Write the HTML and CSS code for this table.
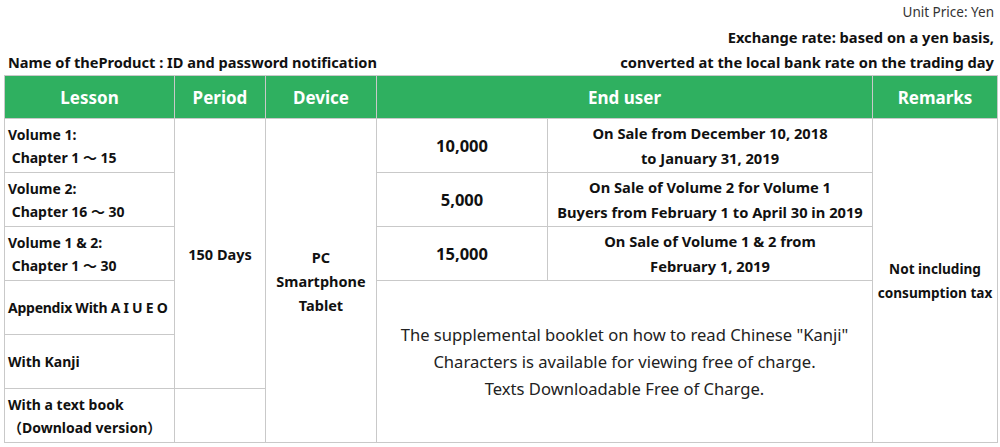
FILE: index.html
```html
<!DOCTYPE html>
<html>
<head>
<meta charset="utf-8">
<link rel="stylesheet" href="styles.css">
</head>
<body>
<div class="page">
  <div class="unit">Unit Price: Yen</div>
  <div class="rate first">Exchange rate: based on a yen basis,</div>
  <div class="titlebar">
    <div class="product">Name of theProduct : ID and password notification</div>
    <div class="rate">converted at the local bank rate on the trading day</div>
  </div>
  <table class="price">
    <colgroup>
      <col class="c-lesson"><col class="c-period"><col class="c-device"><col class="c-price"><col class="c-desc"><col class="c-rem">
    </colgroup>
    <thead>
      <tr>
        <th>Lesson</th><th>Period</th><th>Device</th><th colspan="2">End user</th><th>Remarks</th>
      </tr>
    </thead>
    <tbody>
      <tr>
        <td class="lesson">Volume 1:<br>&nbsp;Chapter 1 ～ 15</td>
        <td class="center" rowspan="5">150 Days</td>
        <td class="center" rowspan="6">PC<br>Smartphone<br>Tablet</td>
        <td class="num">10,000</td>
        <td class="desc">On Sale from December 10, 2018<br>to January 31, 2019</td>
        <td class="center rem" rowspan="6">Not including<br>consumption tax</td>
      </tr>
      <tr>
        <td class="lesson">Volume 2:<br>&nbsp;Chapter 16 ～ 30</td>
        <td class="num">5,000</td>
        <td class="desc">On Sale of Volume 2 for Volume 1<br>Buyers from February 1 to April 30 in 2019</td>
      </tr>
      <tr>
        <td class="lesson">Volume 1 &amp; 2:<br>&nbsp;Chapter 1 ～ 30</td>
        <td class="num">15,000</td>
        <td class="desc">On Sale of Volume 1 &amp; 2 from<br>February 1, 2019</td>
      </tr>
      <tr>
        <td class="lesson tight">Appendix With A I U E O</td>
        <td class="note" colspan="2" rowspan="3">The supplemental booklet on how to read Chinese "Kanji"<br>Characters is available for viewing free of charge.<br>Texts Downloadable Free of Charge.</td>
      </tr>
      <tr>
        <td class="lesson">With Kanji</td>
      </tr>
      <tr>
        <td class="lesson">With a text book<br>（Download version）</td>
        <td></td>
      </tr>
    </tbody>
  </table>
</div>
</body>
</html>
```

FILE: styles.css
```css
html, body {
  margin: 0;
  padding: 0;
  background: #ffffff;
}
body {
  font-family: "Noto Sans", "Noto Sans CJK JP", sans-serif;
  color: #111111;
}
.page {
  width: 1000px;
  padding: 2px 3px 0 4px;
  box-sizing: border-box;
}
.unit {
  text-align: right;
  font-size: 13.5px;
  line-height: 20px;
  color: #333333;
  padding-right: 3px;
}
.rate {
  text-align: right;
  font-size: 14.7px;
  font-weight: bold;
  line-height: 25px;
  padding-right: 3px;
}
.rate.first {
  margin-top: 3px;
}
.titlebar {
  display: flex;
  justify-content: space-between;
  align-items: baseline;
}
.product {
  font-size: 14.6px;
  font-weight: bold;
  line-height: 25px;
  padding-left: 4px;
}
.price {
  width: 993px;
  border-collapse: collapse;
  table-layout: fixed;
  margin-top: 0;
}
.c-lesson { width: 170px; }
.c-period { width: 91px; }
.c-device { width: 111px; }
.c-price { width: 171px; }
.c-desc { width: 325px; }
.c-rem { width: 125px; }
.price th {
  background: #2fb060;
  color: #ffffff;
  font-size: 17px;
  font-weight: bold;
  height: 42px;
  border: 1px solid #c9c9c9;
  padding: 0;
}
.price td {
  border: 1px solid #c9c9c9;
  height: 53px;
  padding: 0;
  font-size: 14px;
  font-weight: bold;
  line-height: 23px;
}
.price td.lesson {
  padding-left: 3px;
  text-align: left;
  white-space: nowrap;
}
.price td.lesson.tight {
  letter-spacing: -0.25px;
}
.price td.center {
  text-align: center;
  line-height: 24px;
  font-size: 14.5px;
}
.price td.num {
  text-align: center;
  font-size: 16.5px;
}
.price td.desc {
  text-align: center;
  line-height: 25px;
  font-size: 14.7px;
}
.price td.note {
  text-align: center;
  font-weight: normal;
  font-size: 16.6px;
  line-height: 27px;
  color: #222222;
}
.price td.rem {
  font-size: 13.6px;
}
```
